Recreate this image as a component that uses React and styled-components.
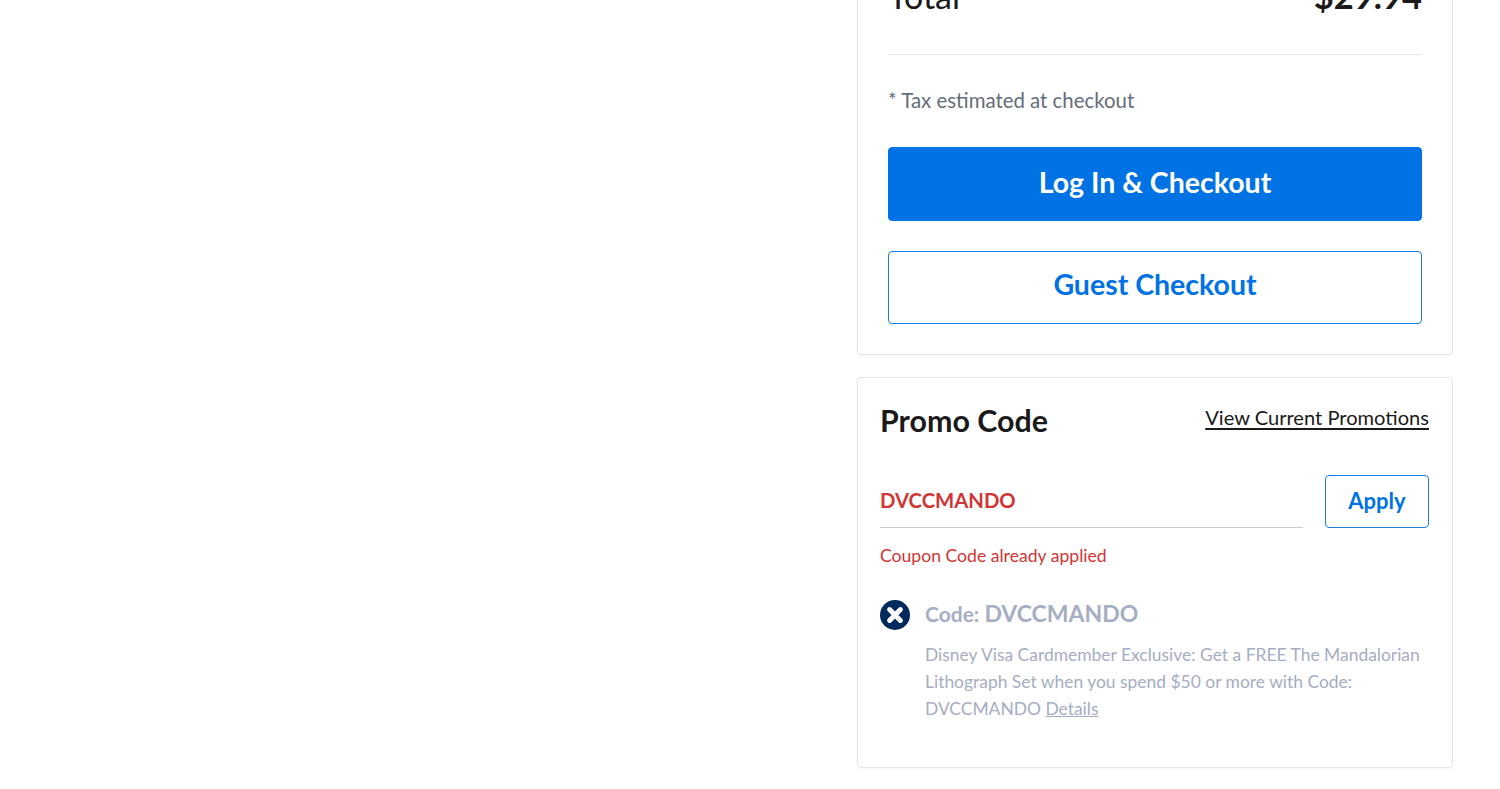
import React from "react";
import styled, { createGlobalStyle } from "styled-components";

const GlobalStyle = createGlobalStyle`
    html, body {
        margin: 0;
        padding: 0;
        background: #fff;
        overflow: hidden;
    }
    body {
        font-family: "Lato", "Open Sans", sans-serif;
    }
`

const Page = styled.div`
    height: 789px;
    overflow: hidden;
    display: flex;
    flex-direction: column;
    justify-content: flex-end;
    align-items: flex-end;
    padding: 0 47px 21px 0;
    box-sizing: border-box;
`

const Card = styled.section`
    width: 596px;
    flex-shrink: 0;
    box-sizing: border-box;
    background: #fff;
    border: 1px solid #e4e6e8;
    border-radius: 4px;
    box-shadow: 0 1px 2px rgba(0, 0, 0, 0.04);
`

const SummaryCard = styled(Card)`
    padding: 0 30px 30px;
    margin-bottom: 22px;
`

const PromoCard = styled(Card)`
    height: 391px;
    padding: 21px 23px 0 22px;
`

const TotalRow = styled.div`
    display: flex;
    justify-content: space-between;
    align-items: baseline;
    color: #1a1a1a;
    font-size: 34px;
    line-height: 40px;
    padding-bottom: 38px;
    border-bottom: 1px solid #e4e6e8;
`

const TotalPrice = styled.span`
    font-weight: 700;
    font-size: 34.5px;
`

const TaxNote = styled.p`
    margin: 33px 0 35px;
    color: #646d7b;
    font-size: 20.4px;
    line-height: 24px;
`

const CheckoutButton = styled.button`
    display: block;
    width: 100%;
    height: ${props => props.$outline ? "73px" : "74px"};
    margin-top: ${props => props.$outline ? "30px" : "0"};
    padding: 0 0 ${props => props.$outline ? "7px" : "5px"};
    box-sizing: border-box;
    border-radius: 4px;
    border: 1px solid ${props => props.$outline ? "#1a80e0" : "#0072e3"};
    background: ${props => props.$outline ? "#fff" : "#0072e3"};
    color: ${props => props.$outline ? "#0072e3" : "#fff"};
    font-family: inherit;
    font-size: 28.5px;
    font-weight: 700;
`

const PromoHeader = styled.div`
    display: flex;
    justify-content: space-between;
    align-items: flex-start;
`

const PromoTitle = styled.h2`
    margin: 0;
    color: #1a1a1a;
    font-size: 30.4px;
    line-height: 42px;
    font-weight: 700;
`

const PromoLink = styled.a`
    color: #1a1a1a;
    font-size: 20.1px;
    line-height: 36px;
    text-decoration: underline;
    text-underline-offset: 3px;
`

const InputRow = styled.div`
    display: flex;
    justify-content: space-between;
    margin-top: 34px;
`

const CodeField = styled.div`
    width: 423px;
    height: 53px;
    box-sizing: border-box;
    border-bottom: 1px solid #c8cacc;
    color: #d13535;
    font-size: 20.3px;
    font-weight: 700;
    line-height: 50px;
`

const ApplyButton = styled.button`
    width: 104px;
    height: 53px;
    padding: 0 0 2px;
    box-sizing: border-box;
    border: 1px solid #1a80e0;
    border-radius: 4px;
    background: #fff;
    color: #0072e3;
    font-family: inherit;
    font-size: 22px;
    font-weight: 700;
`

const ErrorText = styled.p`
    margin: 16px 0 0;
    color: #d13535;
    font-size: 17.6px;
    line-height: 24px;
`

const CouponRow = styled.div`
    display: flex;
    gap: 15px;
    margin-top: 32px;
`

const RemoveIcon = styled.svg`
    width: 30px;
    height: 30px;
    flex-shrink: 0;
`

const CouponBody = styled.div`
    color: #a5aec2;
`

const CouponTitle = styled.div`
    font-size: 21px;
    font-weight: 700;
    line-height: 26px;
`

const CouponCode = styled.span`
    font-size: 23px;
`

const CouponText = styled.p`
    margin: 14px 0 0;
    font-size: 17.45px;
    line-height: 27px;
`

const DetailsLink = styled.a`
    color: inherit;
    text-decoration: underline;
`

const App = () => {
    return (
        <Page>
            <GlobalStyle />
            <SummaryCard>
                <TotalRow>
                    <span>Total</span>
                    <TotalPrice>$29.94</TotalPrice>
                </TotalRow>
                <TaxNote>* Tax estimated at checkout</TaxNote>
                <CheckoutButton>Log In &amp; Checkout</CheckoutButton>
                <CheckoutButton $outline>Guest Checkout</CheckoutButton>
            </SummaryCard>
            <PromoCard>
                <PromoHeader>
                    <PromoTitle>Promo Code</PromoTitle>
                    <PromoLink>View Current Promotions</PromoLink>
                </PromoHeader>
                <InputRow>
                    <CodeField>DVCCMANDO</CodeField>
                    <ApplyButton>Apply</ApplyButton>
                </InputRow>
                <ErrorText>Coupon Code already applied</ErrorText>
                <CouponRow>
                    <RemoveIcon viewBox="0 0 30 30">
                        <circle cx="15" cy="15" r="15" fill="#00295c" />
                        <path d="M9.6 9.6l10.8 10.8M20.4 9.6l-10.8 10.8" stroke="#fff" strokeWidth="5" strokeLinecap="round" />
                    </RemoveIcon>
                    <CouponBody>
                        <CouponTitle>Code: <CouponCode>DVCCMANDO</CouponCode></CouponTitle>
                        <CouponText>
                            Disney Visa Cardmember Exclusive: Get a FREE The Mandalorian Lithograph Set when you spend $50 or more with Code: DVCCMANDO <DetailsLink>Details</DetailsLink>
                        </CouponText>
                    </CouponBody>
                </CouponRow>
            </PromoCard>
        </Page>
    )
}

export default App;
